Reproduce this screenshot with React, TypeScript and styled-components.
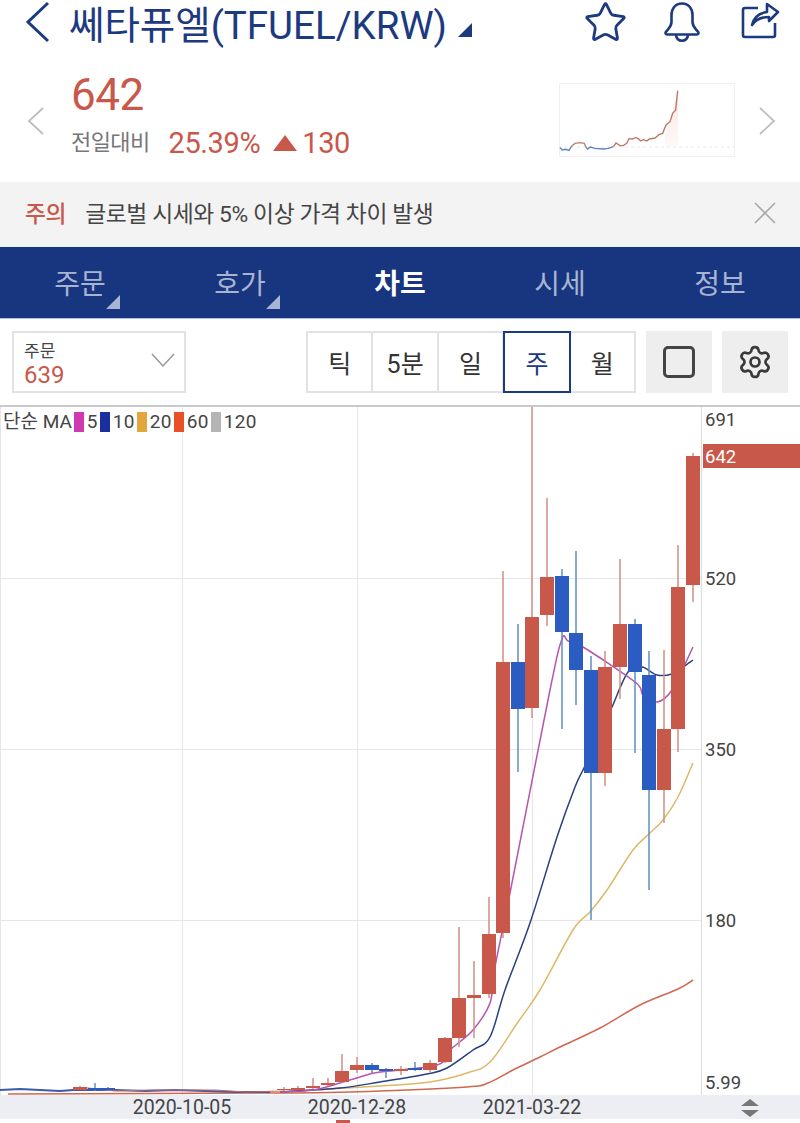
import React from "react";
import styled, { createGlobalStyle } from "styled-components";
import { Star, Settings } from "lucide-react";

const GlobalStyle = createGlobalStyle`
  html, body {
    margin: 0;
    padding: 0;
    background: #fff;
  }
  body {
    font-family: Roboto, "Noto Sans CJK KR", sans-serif;
  }
`;

const NAVY = "#1c3a80";
const RED = "#c8584a";
const BLUE = "#2a5cc2";

const Page = styled.div`
  position: relative;
  width: 800px;
  height: 1123px;
  overflow: hidden;
  background: #fff;
`;

const Header = styled.header`
  display: flex;
  align-items: center;
  height: 44px;
  padding: 0 22px;
  color: ${NAVY};
`;

const Title = styled.h1`
  margin: 0 0 0 17px;
  font-size: 38.5px;
  font-weight: 400;
  white-space: nowrap;
`;

const TitleMark = styled.span`
  width: 0;
  height: 0;
  margin: 16px 0 0 11px;
  border-style: solid;
  border-width: 0 0 14px 14px;
  border-color: transparent transparent ${NAVY} transparent;
`;

const HeaderIcons = styled.div`
  display: flex;
  align-items: center;
  gap: 41px;
  margin-left: auto;
  margin-right: -3px;
`;

const StarIcon = styled(Star)`
  margin-right: -5px;
`;

const Summary = styled.section`
  display: flex;
  align-items: center;
  height: 138px;
  padding: 0 24px 0 27px;
`;

const Chevron = styled.svg`
  flex-shrink: 0;
  margin-top: 16px;
`;

const PriceBlock = styled.div`
  display: flex;
  flex-direction: column;
  margin-left: 26px;
  margin-top: 2px;
`;

const Price = styled.div`
  color: ${RED};
  font-size: 44px;
  line-height: 52px;
  letter-spacing: -0.5px;
`;

const ChangeRow = styled.div`
  display: flex;
  align-items: center;
  margin-top: 6px;
  color: ${RED};
  font-size: 29px;
  line-height: 32px;
  letter-spacing: -0.4px;
`;

const ChangeLabel = styled.span`
  margin-right: 19px;
  color: #777;
  font-size: 22px;
  letter-spacing: -0.6px;
`;

const ChangeMark = styled.span`
  width: 0;
  height: 0;
  margin: 0 5px 0 13px;
  border-style: solid;
  border-width: 0 12px 16px 12px;
  border-color: transparent transparent ${RED} transparent;
`;

const MiniChart = styled.svg`
  display: block;
  margin-left: auto;
  margin-right: 23px;
  margin-top: 14px;
`;

const Notice = styled.div`
  display: flex;
  align-items: center;
  height: 65px;
  padding: 0 24px 4px 25px;
  box-sizing: border-box;
  background: #f3f3f3;
  font-size: 22.8px;
  letter-spacing: -0.4px;
  color: #444;
`;

const NoticeTag = styled.strong`
  margin-right: 19px;
  color: ${RED};
  font-weight: 500;
`;

const NoticeClose = styled.svg`
  margin-left: auto;
`;

const Tabs = styled.nav`
  display: grid;
  grid-template-columns: repeat(5, 160px);
  height: 72px;
  background: #17367f;
  border-bottom: 1px solid #a9c4e6;
  box-sizing: border-box;
`;

const Tab = styled.div<{ $active?: boolean; $corner?: boolean }>`
  position: relative;
  display: flex;
  align-items: center;
  justify-content: center;
  padding-bottom: 2px;
  font-size: 28px;
  font-weight: ${(p) => (p.$active ? 700 : 400)};
  color: ${(p) => (p.$active ? "#fff" : "#a7b4d2")};

  ${(p) =>
    p.$corner &&
    `
    &::after {
      content: "";
      position: absolute;
      left: 106px;
      bottom: 9px;
      border-style: solid;
      border-width: 0 0 14px 14px;
      border-color: transparent transparent #a7b4d2 transparent;
    }
  `}
`;

const Toolbar = styled.div`
  display: flex;
  align-items: flex-start;
  height: 86px;
  padding: 12px 12px 0;
  box-sizing: border-box;
`;

const SelectBox = styled.div`
  position: relative;
  flex: 0 0 174px;
  height: 62px;
  box-sizing: border-box;
  padding: 7px 0 0 10px;
  border: 2px solid #e2e2e2;
`;

const SelectLabel = styled.div`
  color: #444;
  font-size: 17px;
  line-height: 22px;
`;

const SelectValue = styled.div`
  color: ${RED};
  font-size: 24px;
  line-height: 26px;
`;

const SelectArrow = styled.svg`
  position: absolute;
  right: 9px;
  top: 20px;
`;

const Segments = styled.div`
  display: flex;
  flex: 0 0 330px;
  height: 62px;
  margin-left: 120px;
  box-sizing: border-box;
  border: 2px solid #e2e2e2;
`;

const Segment = styled.div<{ $active?: boolean; $last?: boolean }>`
  display: flex;
  flex: 1;
  align-items: center;
  justify-content: center;
  box-sizing: border-box;
  margin: ${(p) => (p.$active ? "-2px 0 -2px -1px" : 0)};
  border: ${(p) => (p.$active ? `2px solid ${NAVY}` : "none")};
  border-right: ${(p) =>
    p.$active ? `2px solid ${NAVY}` : p.$last ? "none" : "2px solid #e2e2e2"};
  color: ${(p) => (p.$active ? NAVY : "#333")};
  font-size: 25px;
`;

const ToolButton = styled.div`
  display: flex;
  flex: 0 0 66px;
  align-items: center;
  justify-content: center;
  height: 62px;
  margin-left: 10px;
  background: #eeeeee;
  color: #3a3a3a;
`;

const SquareGlyph = styled.div`
  width: 32px;
  height: 32px;
  box-sizing: border-box;
  border: 3px solid #444;
  border-radius: 5px;
`;

const ChartArea = styled.div`
  position: relative;
  border-top: 2px solid #c9c9c9;
`;

const ChartSvg = styled.svg`
  display: block;
`;

const Legend = styled.div`
  position: absolute;
  top: 3px;
  left: 3px;
  display: flex;
  align-items: center;
  color: #444;
  font-size: 19px;
  line-height: 24px;
  letter-spacing: 0.3px;
`;

const LegendName = styled.span`
  margin-right: 0;
  letter-spacing: 0;
`;

const LegendSwatch = styled.i<{ $color: string }>`
  width: 10px;
  height: 20px;
  margin: 0 3px 0 2px;
  background: ${(p) => p.$color};
`;

const AxisText = styled.text`
  fill: #444;
  font-family: Roboto, sans-serif;
  font-size: 18.5px;
`;

const DateText = styled(AxisText)`
  font-size: 19.5px;
  text-anchor: middle;
`;

type Candle = [x: number, top: number, bottom: number, hi: number, lo: number, up: boolean];

const candles: Candle[] = [
  [693, 456, 585, 453, 602, true],
  [678, 587, 729, 545, 752, true],
  [664, 729, 790, 650, 823, true],
  [649, 675, 790, 651, 890, false],
  [635, 624, 672, 619, 753, false],
  [620, 624, 667, 559, 699, true],
  [605, 667, 773, 651, 786, true],
  [591, 670, 773, 656, 920, false],
  [576, 633, 670, 551, 705, false],
  [562, 576, 632, 569, 729, false],
  [547, 577, 615, 498, 626, true],
  [532, 617, 708, 407, 718, true],
  [518, 662, 709, 624, 772, false],
  [503, 662, 933, 571, 938, true],
  [489, 934, 994, 897, 998, true],
  [474, 995, 998, 961, 1038, true],
  [459, 998, 1038, 927, 1047, true],
  [445, 1038, 1062, 1037, 1063, true],
  [430, 1063, 1070, 1060, 1072, true],
  [415, 1068, 1070, 1062, 1071, false],
  [401, 1069, 1071, 1066, 1075, true],
  [386, 1069, 1071, 1068, 1078, false],
  [372, 1065, 1070, 1063, 1073, false],
  [357, 1065, 1070, 1057, 1073, true],
  [342, 1071, 1082, 1054, 1083, true],
  [328, 1083, 1085, 1078, 1086, true],
  [313, 1086, 1088, 1078, 1089, true],
  [298, 1088, 1090, 1086, 1090, true],
  [284, 1089, 1090, 1087, 1091, true],
  [80, 1087, 1090, 1086, 1090, true],
  [95, 1088, 1090, 1083, 1091, false],
  [108, 1088, 1090, 1087, 1091, false],
];

const ma5 =
  "693,647 672,690 657,702 643,695 635,682 583,647 568,641 562,639 550,690 510,893 495,967 490,1003 473,1030 450,1050 437,1065 380,1072 360,1077 340,1083 313,1090 280,1092";
const ma10 =
  "693,660 683,667 672,674 657,675 642,667 628,672 612,707 597,742 583,770 575,787 557,837 530,923 505,990 490,1037 473,1050 447,1068 427,1074 380,1082 340,1088 280,1092";
const ma20 =
  "693,763 678,797 663,820 650,833 633,850 607,890 590,912 573,930 540,990 518,1022 490,1062 467,1073 430,1082 380,1086 280,1092";
const ma60 =
  "693,980 678,989 640,1005 600,1028 560,1047 540,1057 513,1070 488,1083 467,1087 380,1091 280,1093 8,1094";
const flat =
  "0,1090 20,1089 40,1090 60,1091 73,1090 115,1090 145,1091 175,1090 205,1091 235,1092 270,1092";
const flatRed = "73,1088 88,1088 115,1091 150,1090 215,1090 245,1092 284,1091";

// catmull-rom through the points, so the averages don't look like polylines
const smooth = (points: string) => {
  const p = points.split(" ").map((s) => s.split(",").map(Number));
  let d = `M${p[0][0]} ${p[0][1]}`;
  for (let i = 0; i < p.length - 1; i++) {
    const a = p[Math.max(i - 1, 0)];
    const b = p[i];
    const c = p[i + 1];
    const e = p[Math.min(i + 2, p.length - 1)];
    const c1x = b[0] + (c[0] - a[0]) / 6;
    const c1y = b[1] + (c[1] - a[1]) / 6;
    const c2x = c[0] - (e[0] - b[0]) / 6;
    const c2y = c[1] - (e[1] - b[1]) / 6;
    d += ` C${c1x} ${c1y} ${c2x} ${c2y} ${c[0]} ${c[1]}`;
  }
  return d;
};

const miniPoints = (pts: number[][]) =>
  pts.map(([zx, zy]) => `${555 + zx / 3},${80 + zy / 3}`).join(" ");

const miniBlueA = [[15, 203], [22, 210], [32, 208], [42, 211], [50, 198]];
const miniRedA = [[50, 198], [60, 190], [75, 188], [88, 190], [92, 200]];
const miniBlueB = [[92, 200], [98, 207], [106, 201], [120, 205], [145, 207], [160, 205], [175, 200]];
const miniRedB = [
  [175, 200], [183, 189], [195, 197], [205, 197], [215, 190], [222, 176], [232, 177],
  [242, 173], [250, 176], [257, 183], [265, 179], [275, 183], [283, 177], [300, 174],
  [312, 164], [323, 160], [333, 135], [345, 125], [353, 100], [362, 90], [368, 32],
];

const Chart = () => (
  <ChartSvg width={800} height={716} viewBox="0 407 800 716">
    <rect x={0} y={1095} width={800} height={24} fill="#eceef3" />
    {[0, 182, 357, 532].map((x) => (
      <line key={x} x1={x + 0.5} x2={x + 0.5} y1={407} y2={1095} stroke="#e6e6e6" />
    ))}
    {[578, 749, 920].map((y) => (
      <line key={y} x1={0} x2={701} y1={y + 0.5} y2={y + 0.5} stroke="#e6e6e6" />
    ))}
    <line x1={701.5} x2={701.5} y1={407} y2={1095} stroke="#dcdcdc" />

    <path d={smooth(ma60)} fill="none" stroke="#d0684f" strokeWidth={1.5} />
    <path d={smooth(ma20)} fill="none" stroke="#dcb96a" strokeWidth={1.5} />
    <path d={smooth(ma10)} fill="none" stroke="#28407f" strokeWidth={1.5} />
    <path d={smooth(ma5)} fill="none" stroke="#b655b0" strokeWidth={1.5} />
    <polyline points={flat} fill="none" stroke="#3c5ca8" strokeWidth={2} />
    <polyline points={flatRed} fill="none" stroke="#c8685a" strokeWidth={1} />

    {candles.map(([x, top, bottom, hi, lo, up]) => (
      <g key={x}>
        <line
          x1={x}
          x2={x}
          y1={hi}
          y2={lo}
          stroke={up ? "#d08e80" : "#5f8fbf"}
          strokeWidth={1.5}
        />
        <rect
          x={x - 7}
          y={top}
          width={14}
          height={bottom - top}
          fill={up ? RED : BLUE}
        />
      </g>
    ))}

    <rect x={703} y={444} width={97} height={24} fill={RED} />
    <AxisText x={705} y={463} style={{ fill: "#fff" }}>642</AxisText>
    <AxisText x={705} y={426}>691</AxisText>
    <AxisText x={705} y={585}>520</AxisText>
    <AxisText x={705} y={756}>350</AxisText>
    <AxisText x={705} y={927}>180</AxisText>
    <AxisText x={705} y={1089}>5.99</AxisText>
    <DateText x={182} y={1114}>2020-10-05</DateText>
    <DateText x={357} y={1114}>2020-12-28</DateText>
    <DateText x={532} y={1114}>2021-03-22</DateText>

    <path d="M741 1106 L750 1099 L759 1106 Z" fill="#777" />
    <path d="M741 1110 L750 1117 L759 1110 Z" fill="#777" />
    <rect x={336} y={1120} width={14} height={3} fill={RED} />
  </ChartSvg>
);

const BellIcon = () => (
  <svg width={36} height={40} viewBox="0 0 36 40" fill="none" stroke={NAVY} strokeWidth={2.6} strokeLinejoin="round">
    <path d="M18 1.5 C11 1.5 7.5 7 7.5 13 V20 C7.5 25 4 27 1.8 30 C1 31.5 2 32.5 3.5 32.5 H32.5 C34 32.5 35 31.5 34.2 30 C32 27 28.5 25 28.5 20 V13 C28.5 7 25 1.5 18 1.5 Z" />
    <path d="M12 33 C12.5 37 15 38.7 18 38.7 C21 38.7 23.5 37 24 33" />
  </svg>
);

const ShareIcon = () => (
  <svg width={40} height={40} viewBox="0 0 40 40" fill="none" stroke={NAVY} strokeWidth={2.6} strokeLinejoin="round">
    <path d="M17 6 H4 a2 2 0 0 0 -2 2 V33 a2 2 0 0 0 2 2 H32 a2 2 0 0 0 2 -2 V21" />
    <path d="M11 23 C13 15 18 11 26 10 V2 L37 10 L28 19 V15 C21 15 15 17 11 23 Z" />
  </svg>
);

const App = () => (
  <Page>
    <GlobalStyle />
    <Header>
      <svg width={30} height={42} viewBox="0 0 30 42" fill="none" stroke={NAVY} strokeWidth={3}>
        <path d="M26 2 L6 21 L26 40" />
      </svg>
      <Title>쎄타퓨엘(TFUEL/KRW)</Title>
      <TitleMark />
      <HeaderIcons>
        <StarIcon size={45} strokeWidth={1.5} />
        <BellIcon />
        <ShareIcon />
      </HeaderIcons>
    </Header>

    <Summary>
      <Chevron width={18} height={28} viewBox="0 0 18 28" fill="none" stroke="#bdbdbd" strokeWidth={1.8}>
        <path d="M16 1 L2 14 L16 27" />
      </Chevron>
      <PriceBlock>
        <Price>642</Price>
        <ChangeRow>
          <ChangeLabel>전일대비</ChangeLabel>
          25.39%
          <ChangeMark />
          130
        </ChangeRow>
      </PriceBlock>
      <MiniChart width={176} height={74} viewBox="559 83 176 74">
        <defs>
          <linearGradient id="miniFade" x1="0" x2="0" y1="0" y2="1">
            <stop offset="0" stopColor="#f9e6e2" />
            <stop offset="1" stopColor="#fef9f8" />
          </linearGradient>
        </defs>
        <rect x={559.5} y={83.5} width={175} height={73} fill="#fff" stroke="#efefef" />
        <line x1={559} x2={735} y1={147} y2={147} stroke="#e8e8e8" strokeDasharray="3 3" />
        <path d="M665 134 L670 122 L678 91 V147 H665 Z" fill="url(#miniFade)" />
        <polyline points={miniPoints(miniBlueA)} fill="none" stroke="#5b86b8" strokeWidth={1.4} />
        <polyline points={miniPoints(miniRedA)} fill="none" stroke="#c0806f" strokeWidth={1.4} />
        <polyline points={miniPoints(miniBlueB)} fill="none" stroke="#5b86b8" strokeWidth={1.4} />
        <polyline points={miniPoints(miniRedB)} fill="none" stroke="#bd7a6c" strokeWidth={1.4} />
      </MiniChart>
      <Chevron width={18} height={28} viewBox="0 0 18 28" fill="none" stroke="#bdbdbd" strokeWidth={1.8}>
        <path d="M2 1 L16 14 L2 27" />
      </Chevron>
    </Summary>

    <Notice>
      <NoticeTag>주의</NoticeTag>
      글로벌 시세와 5% 이상 가격 차이 발생
      <NoticeClose width={22} height={22} viewBox="0 0 22 22" stroke="#aaa" strokeWidth={1.6}>
        <path d="M1 1 L21 21 M21 1 L1 21" />
      </NoticeClose>
    </Notice>

    <Tabs>
      <Tab $corner>주문</Tab>
      <Tab $corner>호가</Tab>
      <Tab $active>차트</Tab>
      <Tab>시세</Tab>
      <Tab>정보</Tab>
    </Tabs>

    <Toolbar>
      <SelectBox>
        <SelectLabel>주문</SelectLabel>
        <SelectValue>639</SelectValue>
        <SelectArrow width={24} height={14} viewBox="0 0 24 14" fill="none" stroke="#999" strokeWidth={1.5}>
          <path d="M1 1 L12 13 L23 1" />
        </SelectArrow>
      </SelectBox>
      <Segments>
        <Segment>틱</Segment>
        <Segment>5분</Segment>
        <Segment>일</Segment>
        <Segment $active>주</Segment>
        <Segment $last>월</Segment>
      </Segments>
      <ToolButton>
        <SquareGlyph />
      </ToolButton>
      <ToolButton>
        <Settings size={36} strokeWidth={1.8} />
      </ToolButton>
    </Toolbar>

    <ChartArea>
      <Chart />
      <Legend>
        <LegendName>단순 MA</LegendName>
        <LegendSwatch $color="#d03ab0" />5
        <LegendSwatch $color="#1b2fa0" />10
        <LegendSwatch $color="#e2a63c" />20
        <LegendSwatch $color="#ea5028" />60
        <LegendSwatch $color="#b4b4b4" />120
      </Legend>
    </ChartArea>
  </Page>
);

export default App;
